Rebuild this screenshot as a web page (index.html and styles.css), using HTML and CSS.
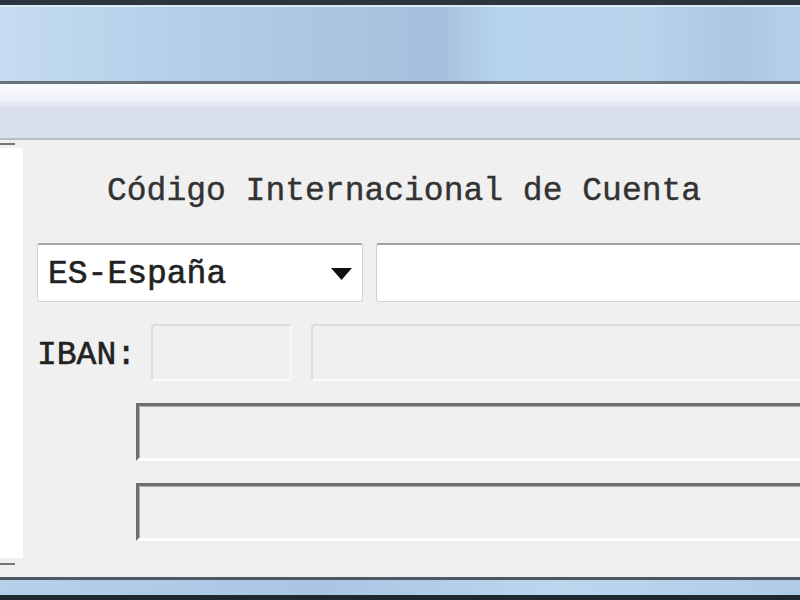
FILE: index.html
```html
<!DOCTYPE html>
<html lang="es">
<head>
  <meta charset="UTF-8">
  <meta name="viewport" content="width=device-width, initial-scale=1.0">
  <title>Código Internacional de Cuenta</title>
  <link rel="stylesheet" href="styles.css">
</head>
<body>
  <header class="titlebar"></header>

  <div class="toolbar"></div>

  <main class="window-body">
    <div class="side-panel"></div>

    <section class="iban-form">
      <h1 class="form-title">Código Internacional de Cuenta</h1>

      <div class="row row-account">
        <div class="country-select">
          <span>ES-España</span>
          <svg class="arrow" width="21" height="12" viewBox="0 0 21 12"><polygon points="0,0 21,0 10.5,12" fill="#111"/></svg>
        </div>
        <div class="account-input"></div>
      </div>

      <div class="row row-iban">
        <label class="iban-label">IBAN:</label>
        <div class="field-off field-check"></div>
        <div class="field-off field-code"></div>
      </div>

      <div class="sunken"></div>
      <div class="sunken"></div>
    </section>
  </main>

  <footer class="taskbar"></footer>
</body>
</html>
```

FILE: styles.css
```css
body {
  margin: 0;
  padding: 0;
  width: 800px;
  height: 600px;
  overflow: hidden;
  display: flex;
  flex-direction: column;
  background-color: #f0f0f0;
  font-family: "Liberation Mono", "Courier New", monospace;
  color: #2b2b2b;
}

.titlebar {
  flex-shrink: 0;
  height: 84px;
  box-sizing: border-box;
  border-top: 5px solid #2c3440;
  box-shadow: inset 0 2px 0 #dfe9f3;
  background: linear-gradient(90deg, #c6dcf0 0%, #b4d0ea 20%, #adc8e3 35%, #a5c0dc 55%, #b6d3ec 62%, #b9d5ec 80%, #aac6e2 92%, #b5d1ea 100%);
  border-bottom: 3px solid #6a737c;
}

.toolbar {
  flex-shrink: 0;
  height: 56px;
  box-sizing: border-box;
  background: linear-gradient(180deg, #fbfcfe 0%, #eef1f8 30%, #d9deeb 45%, #dbe0ed 95%);
  border-bottom: 2px solid #b9bcc2;
}

.window-body {
  flex: 1;
  display: flex;
  position: relative;
  min-width: 0;
}

.side-panel {
  flex-shrink: 0;
  width: 23px;
  height: 410px;
  margin-top: 8px;
  background-color: #fff;
}

.side-panel::before,
.side-panel::after {
  content: "";
  position: absolute;
  left: 0;
  width: 15px;
  height: 2px;
  background-color: #777;
}

.side-panel::before { top: 3px; }
.side-panel::after { top: 423px; }

.iban-form {
  flex: 1;
  min-width: 0;
  margin-left: 14px;
}

.form-title {
  margin: 0;
  padding-left: 70px;
  height: 103px;
  line-height: 103px;
  font-size: 33px;
  font-weight: normal;
  white-space: nowrap;
  color: #333;
  -webkit-text-stroke: 0.4px #333;
}

.row {
  display: flex;
  align-items: center;
}

.row-account {
  height: 59px;
  gap: 13px;
}

.country-select {
  flex-shrink: 0;
  width: 326px;
  height: 59px;
  box-sizing: border-box;
  display: flex;
  align-items: center;
  justify-content: space-between;
  padding: 2px 10px 0 10px;
  background-color: #fff;
  border: 1px solid #d4d4d4;
  border-top: 2px solid #a8a8a8;
  border-radius: 3px;
  font-size: 33px;
  color: #222;
  -webkit-text-stroke: 0.6px #222;
}

.account-input {
  flex-shrink: 0;
  width: 460px;
  height: 59px;
  box-sizing: border-box;
  background-color: #fff;
  border: 1px solid #d4d4d4;
  border-top: 2px solid #a0a0a0;
  border-radius: 3px 0 0 3px;
}

.row-iban {
  margin-top: 22px;
  height: 57px;
}

.iban-label {
  flex-shrink: 0;
  width: 114px;
  font-size: 33px;
  color: #222;
  -webkit-text-stroke: 0.6px #222;
  padding-top: 6px;
}

.field-off {
  flex-shrink: 0;
  height: 57px;
  box-sizing: border-box;
  background-color: #f0f0f0;
  border: 2px solid #dcdcdc;
  border-bottom-color: #fafafa;
  border-right-color: #f8f8f8;
  border-radius: 4px;
}

.field-check {
  width: 141px;
}

.field-code {
  width: 520px;
  margin-left: 19px;
}

.sunken {
  margin: 22px 0 0 99px;
  width: 700px;
  height: 58px;
  box-sizing: border-box;
  background-color: #f0f0f0;
  border-top: 3px solid #6f6f6f;
  border-left: 3px solid #6f6f6f;
  border-bottom: 3px solid #fdfdfd;
  box-shadow: inset 1px 1px 0 #b0b0b0;
}

.taskbar {
  flex-shrink: 0;
  height: 23px;
  box-sizing: border-box;
  border-top: 3px solid #4e5862;
  border-bottom: 5px solid #1f2830;
  background: linear-gradient(90deg, #b6d0ea 0%, #a9c5e2 40%, #bcd6ee 70%, #afcbe6 100%);
}
```
